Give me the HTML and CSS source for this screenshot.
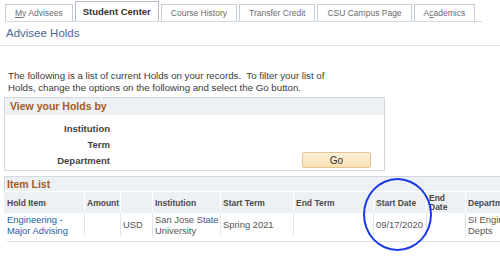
FILE: index.html
```html
<!DOCTYPE html>
<html lang="en">
<head>
  <meta charset="UTF-8" />
  <meta name="viewport" content="width=device-width, initial-scale=1.0" />
  <title>Advisee Holds</title>
  <link rel="stylesheet" href="styles.css">
</head>
<body>
  <div class="tabs">
    <a class="tab"><u>M</u>y Advisees</a>
    <a class="tab active">Student Center</a>
    <a class="tab">Course History</a>
    <a class="tab">Transfer Credit</a>
    <a class="tab">CSU Campus Page</a>
    <a class="tab">A<u>c</u>ademics</a>
  </div>

  <h1 class="page-title">Advisee Holds</h1>

  <p class="intro">The following is a list of current Holds on your records.&nbsp; To filter your list of Holds, change the options on the following and select the Go button.</p>

  <div class="filter-box">
    <div class="box-header">View your Holds by</div>
    <div class="filter-body">
      <div class="filter-row"><span class="label">Institution</span></div>
      <div class="filter-row"><span class="label">Term</span></div>
      <div class="filter-row">
        <span class="label">Department</span>
        <button class="go-btn">Go</button>
      </div>
    </div>
  </div>

  <div class="item-list">
    <div class="box-header">Item List</div>
    <table class="grid">
      <colgroup>
        <col style="width:80px">
        <col style="width:36px">
        <col style="width:32px">
        <col style="width:68px">
        <col style="width:73px">
        <col style="width:80px">
        <col style="width:53px">
        <col style="width:39px">
        <col style="width:80px">
      </colgroup>
      <thead>
        <tr>
          <th>Hold Item</th>
          <th>Amount</th>
          <th></th>
          <th>Institution</th>
          <th>Start Term</th>
          <th>End Term</th>
          <th>Start Date</th>
          <th class="two-line">End Date</th>
          <th>Department</th>
        </tr>
      </thead>
      <tbody>
        <tr>
          <td><a class="link">Engineering - Major Advising</a></td>
          <td></td>
          <td>USD</td>
          <td>San Jose State University</td>
          <td>Spring 2021</td>
          <td></td>
          <td>09/17/2020</td>
          <td></td>
          <td>SI Engineering Depts</td>
        </tr>
      </tbody>
    </table>
    <div class="list-foot"></div>
  </div>

  <div class="marker"></div>
</body>
</html>
```

FILE: styles.css
```css
body {
  margin: 0;
  width: 500px;
  height: 258px;
  overflow: hidden;
  background-color: #fff;
  color: #333;
  font-family: "Liberation Sans", Arial, sans-serif;
  position: relative;
}

.tabs {
  display: flex;
  align-items: flex-end;
  gap: 2px;
  margin-left: 5px;
  width: 477px;
  height: 21px;
  border-bottom: 1px solid #d3dae1;
}

.tab {
  height: 16px;
  line-height: 16px;
  padding: 0 9px;
  border: 1px solid #c6ced7;
  border-bottom: none;
  background-color: #fff;
  color: #6b6b6b;
  font-size: 8.5px;
}

.tab.active {
  height: 19px;
  line-height: 19px;
  padding: 0 7px;
  border-color: #b4bdc8;
  color: #333;
  font-size: 9.5px;
  font-weight: bold;
}

.page-title {
  margin: 0;
  height: 23px;
  line-height: 23px;
  padding-left: 6px;
  border-bottom: 1px solid #dbe0e5;
  color: #4b6a8c;
  font-size: 11.5px;
  font-weight: normal;
}

.intro {
  margin: 24px 0 0 8px;
  width: 320px;
  font-size: 9.7px;
  line-height: 12px;
  color: #3a3a3a;
}

.box-header {
  height: 17px;
  line-height: 17px;
  padding-left: 5px;
  background-color: #eef1f3;
  color: #a65b1e;
  font-size: 10.5px;
  font-weight: bold;
}

.filter-box {
  margin: 3px 0 0 4px;
  width: 381px;
  border: 1px solid #d3d9df;
  box-sizing: border-box;
}

.filter-body {
  padding: 5px 0 2px;
}

.filter-row {
  display: flex;
  align-items: center;
  height: 16px;
}

.label {
  width: 105px;
  text-align: right;
  color: #444;
  font-size: 9.5px;
  font-weight: bold;
}

.go-btn {
  margin-left: auto;
  margin-right: 13px;
  width: 69px;
  height: 16px;
  padding: 0;
  border: 1px solid #e4c493;
  border-radius: 2px;
  background: linear-gradient(#fdf1dc, #f9e0b2);
  color: #333;
  font-family: inherit;
  font-size: 10px;
}

.item-list {
  margin: 5px 0 0 4px;
  width: 600px;
  border-top: 1px solid #d3d9df;
}

.item-list .box-header {
  height: 14px;
  line-height: 14px;
  padding-left: 2px;
  border-left: 1px solid #d3d9df;
  border-bottom: 1px solid #fff;
}

.grid {
  border-collapse: separate;
  border-spacing: 0;
  table-layout: fixed;
  width: 541px;
}

.grid th {
  height: 21px;
  padding: 0 2px;
  background-color: #eef1f3;
  border-left: 1px solid #fff;
  color: #4a4a4a;
  font-size: 8.5px;
  font-weight: bold;
  text-align: left;
  vertical-align: middle;
}

.grid th.two-line {
  line-height: 9px;
}

.grid td {
  height: 23px;
  padding: 0 0 0 2px;
  border-left: 1px solid #e2e6ea;
  color: #555;
  font-size: 9.4px;
  line-height: 11px;
  vertical-align: middle;
}

.grid th:first-child,
.grid td:first-child {
  border-left: none;
  padding-left: 3px;
}

.link {
  color: #245e9f;
  text-decoration: none;
}

.list-foot {
  margin: 5px 0 0 3px;
  border-top: 1px solid #dadfe4;
}

.marker {
  position: absolute;
  left: 363px;
  top: 178px;
  width: 69px;
  height: 73px;
  border: 2.5px solid #1a3ae6;
  border-radius: 50%;
  box-sizing: border-box;
}
```
